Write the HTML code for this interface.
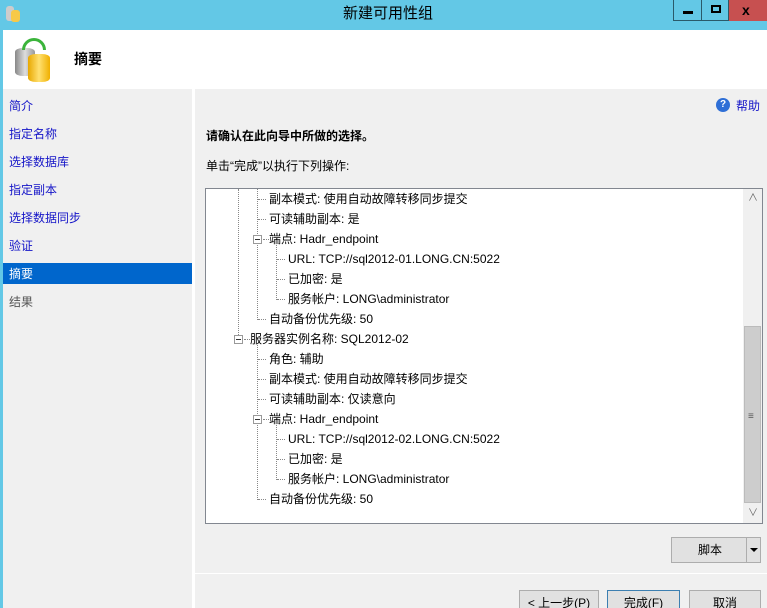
<!DOCTYPE html><html style="width:767px;height:608px;overflow:hidden"><head><meta charset="utf-8"><style>
*{margin:0;padding:0;box-sizing:border-box}
body{width:767px;height:608px;overflow:hidden;background:#63c8e6;font-family:"Liberation Sans","Noto Sans CJK SC",sans-serif;font-size:12px;position:relative}
.a{position:absolute}
.t{position:absolute;white-space:nowrap;line-height:16px}
.nav{color:#1515c8}
.dl{position:absolute;border-left:1px dotted #888}
.dh{position:absolute;border-top:1px dotted #888;width:8px}
.mb{position:absolute;width:9px;height:9px;border:1px solid #999;background:#fff}
.mb:after{content:"";position:absolute;left:1px;top:3px;width:5px;height:1px;background:#333}
.btn{position:absolute;border:1px solid #adadad;background:#e1e1e1;text-align:center;line-height:24px;height:26px}
</style></head><body>
<div class="t" style="left:343px;top:6px;font-size:15px;color:#000">新建可用性组</div>
<div class="a" style="left:6px;top:6px;width:8px;height:15px;background:#ccc;border-radius:3px"></div>
<div class="a" style="left:11px;top:10px;width:9px;height:12px;background:#f7c948;border-radius:3px"></div>
<div class="a" style="left:673px;top:0;width:29px;height:21px;border:1px solid #2a5a6a;border-top:0"></div>
<div class="a" style="left:683px;top:11px;width:10px;height:3px;background:#000"></div>
<div class="a" style="left:702px;top:0;width:27px;height:21px;border:1px solid #2a5a6a;border-top:0;border-left:0"></div>
<div class="a" style="left:711px;top:5px;width:10px;height:8px;border:2px solid #000"></div>
<div class="a" style="left:729px;top:0;width:38px;height:21px;background:#c75050"></div>
<div class="t" style="left:742px;top:2px;font-weight:bold;font-size:14px">x</div>
<div class="a" style="left:3px;top:30px;width:764px;height:578px;background:#f0f0f0"></div>
<div class="a" style="left:3px;top:30px;width:764px;height:59px;background:#fff"></div>
<div class="a" style="left:15px;top:48px;width:20px;height:28px;background:linear-gradient(90deg,#888,#ddd,#999);border-radius:8px/4px"></div>
<div class="a" style="left:28px;top:54px;width:22px;height:28px;background:linear-gradient(90deg,#e8a800,#ffe070,#f0b000);border-radius:8px/4px"></div>
<div class="a" style="left:22px;top:38px;width:24px;height:12px;border:3px solid #3bb43b;border-bottom:0;border-radius:12px 12px 0 0"></div>
<div class="t" style="left:74px;top:51px;font-size:14px;font-weight:bold">摘要</div>
<div class="a" style="left:192px;top:89px;width:3px;height:519px;background:#fff"></div>
<div class="t nav" style="left:9px;top:98px">简介</div>
<div class="t nav" style="left:9px;top:126px">指定名称</div>
<div class="t nav" style="left:9px;top:154px">选择数据库</div>
<div class="t nav" style="left:9px;top:182px">指定副本</div>
<div class="t nav" style="left:9px;top:210px">选择数据同步</div>
<div class="t nav" style="left:9px;top:238px">验证</div>
<div class="a" style="left:3px;top:263px;width:189px;height:21px;background:#0066cc"></div>
<div class="t" style="left:9px;top:266px;color:#fff">摘要</div>
<div class="t" style="left:9px;top:294px;color:#555">结果</div>
<div class="a" style="left:716px;top:98px;width:14px;height:14px;border-radius:50%;background:#2f6fd6;color:#fff;font-size:10px;font-weight:bold;text-align:center;line-height:14px">?</div>
<div class="t nav" style="left:736px;top:98px">帮助</div>
<div class="t" style="left:206px;top:128px;font-weight:bold">请确认在此向导中所做的选择。</div>
<div class="t" style="left:206px;top:158px">单击“完成”以执行下列操作:</div>
<div class="a" style="left:205px;top:188px;width:558px;height:336px;background:#fff;border:1px solid #828790;overflow:hidden">
<div class="dl" style="left:32px;top:0;height:150px"></div>
<div class="dl" style="left:51px;top:0;height:131px"></div>
<div class="dh" style="left:52px;top:10px"></div>
<div class="dh" style="left:52px;top:30px"></div>
<div class="mb" style="left:47px;top:46px"></div>
<div class="dh" style="left:57px;top:50px;width:6px"></div>
<div class="dl" style="left:70px;top:56px;height:55px"></div>
<div class="dh" style="left:71px;top:70px"></div>
<div class="dh" style="left:71px;top:90px"></div>
<div class="dh" style="left:71px;top:110px"></div>
<div class="dh" style="left:52px;top:130px"></div>
<div class="mb" style="left:28px;top:146px"></div>
<div class="dh" style="left:38px;top:150px;width:6px"></div>
<div class="dl" style="left:51px;top:156px;height:155px"></div>
<div class="dh" style="left:52px;top:170px"></div>
<div class="dh" style="left:52px;top:190px"></div>
<div class="dh" style="left:52px;top:210px"></div>
<div class="mb" style="left:47px;top:226px"></div>
<div class="dh" style="left:57px;top:230px;width:6px"></div>
<div class="dl" style="left:70px;top:236px;height:55px"></div>
<div class="dh" style="left:71px;top:250px"></div>
<div class="dh" style="left:71px;top:270px"></div>
<div class="dh" style="left:71px;top:290px"></div>
<div class="dh" style="left:52px;top:310px"></div>
<div class="t" style="left:63px;top:2px">副本模式: 使用自动故障转移同步提交</div>
<div class="t" style="left:63px;top:22px">可读辅助副本: 是</div>
<div class="t" style="left:63px;top:42px">端点: Hadr_endpoint</div>
<div class="t" style="left:82px;top:62px">URL: TCP://sql2012-01.LONG.CN:5022</div>
<div class="t" style="left:82px;top:82px">已加密: 是</div>
<div class="t" style="left:82px;top:102px">服务帐户: LONG\administrator</div>
<div class="t" style="left:63px;top:122px">自动备份优先级: 50</div>
<div class="t" style="left:44px;top:142px">服务器实例名称: SQL2012-02</div>
<div class="t" style="left:63px;top:162px">角色: 辅助</div>
<div class="t" style="left:63px;top:182px">副本模式: 使用自动故障转移同步提交</div>
<div class="t" style="left:63px;top:202px">可读辅助副本: 仅读意向</div>
<div class="t" style="left:63px;top:222px">端点: Hadr_endpoint</div>
<div class="t" style="left:82px;top:242px">URL: TCP://sql2012-02.LONG.CN:5022</div>
<div class="t" style="left:82px;top:262px">已加密: 是</div>
<div class="t" style="left:82px;top:282px">服务帐户: LONG\administrator</div>
<div class="t" style="left:63px;top:302px">自动备份优先级: 50</div>
<div class="a" style="left:537px;top:0;width:19px;height:334px;background:#f0f0f0"></div>
<div class="t" style="left:542px;top:2px;color:#666;font-size:10px">∧</div>
<div class="a" style="left:538px;top:137px;width:17px;height:177px;background:#cdcdcd;border:1px solid #bbb"></div>
<div class="t" style="left:542px;top:220px;color:#555;font-size:10px">≡</div>
<div class="t" style="left:542px;top:317px;color:#666;font-size:10px">∨</div>
</div>
<div class="btn" style="left:671px;top:537px;width:90px;text-align:left;padding-left:26px">脚本</div>
<div class="a" style="left:746px;top:538px;width:1px;height:24px;background:#adadad"></div>
<div class="a" style="left:750px;top:548px;border:4px solid transparent;border-top:4px solid #000"></div>
<div class="a" style="left:195px;top:573px;width:572px;height:1px;background:#fff"></div>
<div class="btn" style="left:519px;top:590px;width:80px">&lt; 上一步(P)</div>
<div class="btn" style="left:607px;top:590px;width:73px;border-color:#3c7fb1">完成(F)</div>
<div class="btn" style="left:689px;top:590px;width:72px">取消</div>
</body></html>
